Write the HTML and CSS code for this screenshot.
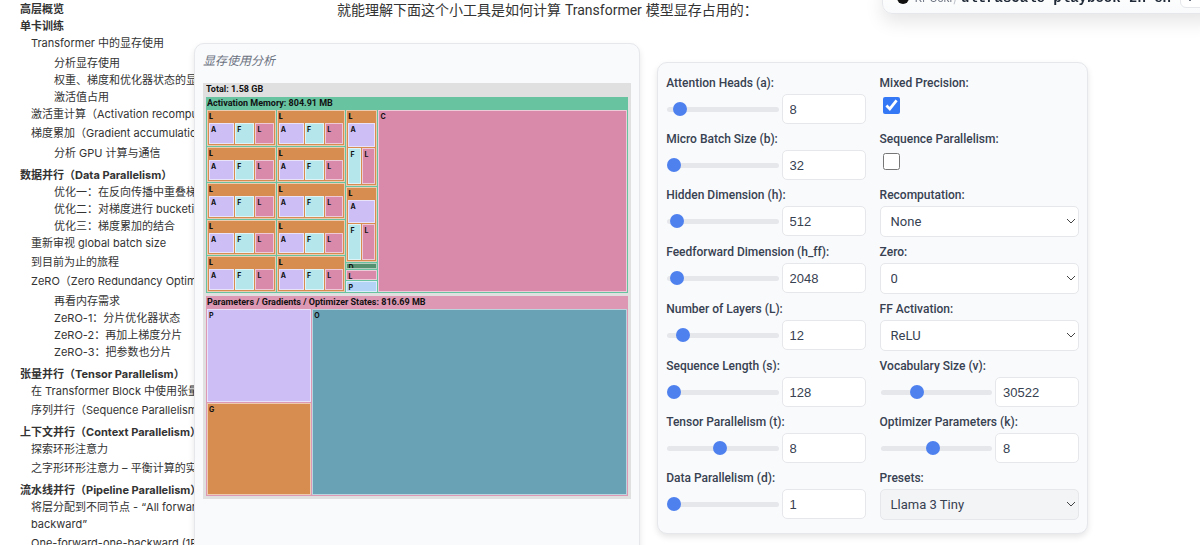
FILE: index.html
```html
<!DOCTYPE html>
<html lang="zh">
<head>
<meta charset="utf-8">
<title>Ultrascale Playbook</title>
<link rel="stylesheet" href="styles.css">
</head>
<body>
<div class="page">
  <nav class="toc">
    <a class="l1" href="#a">高层概览</a>
    <a class="l1" href="#a">单卡训练</a>
    <a class="l2" href="#a">Transformer 中的显存使用</a>
    <a class="l3 g3" href="#a">分析显存使用</a>
    <a class="l3" href="#a">权重、梯度和优化器状态的显存</a>
    <a class="l3" href="#a">激活值占用</a>
    <a class="l2" href="#a">激活重计算（Activation recomputation）</a>
    <a class="l2 g2" href="#a">梯度累加（Gradient accumulation）</a>
    <a class="l3 g3" href="#a">分析 GPU 计算与通信</a>
    <a class="l1 g5" href="#a">数据并行（Data Parallelism）</a>
    <a class="l3" href="#a">优化一：在反向传播中重叠梯度同步</a>
    <a class="l3" href="#a">优化二：对梯度进行 bucketing</a>
    <a class="l3" href="#a">优化三：梯度累加的结合</a>
    <a class="l2" href="#a">重新审视 global batch size</a>
    <a class="l2 g2" href="#a">到目前为止的旅程</a>
    <a class="l2 g2" href="#a">ZeRO（Zero Redundancy Optimizer）</a>
    <a class="l3 g3" href="#a">再看内存需求</a>
    <a class="l3" href="#a">ZeRO-1：分片优化器状态</a>
    <a class="l3" href="#a">ZeRO-2：再加上梯度分片</a>
    <a class="l3" href="#a">ZeRO-3：把参数也分片</a>
    <a class="l1 g5" href="#a">张量并行（Tensor Parallelism）</a>
    <a class="l2" href="#a">在 Transformer Block 中使用张量并行</a>
    <a class="l2 g2" href="#a">序列并行（Sequence Parallelism）</a>
    <a class="l1 g5" href="#a">上下文并行（Context Parallelism）</a>
    <a class="l2" href="#a">探索环形注意力</a>
    <a class="l2 g2" href="#a">之字形环形注意力 – 平衡计算的实现</a>
    <a class="l1 g5" href="#a">流水线并行（Pipeline Parallelism）</a>
    <a class="l2" href="#a">将层分配到不同节点 - “All forward, all<br>backward”</a>
    <a class="l2 g2" href="#a">One-forward-one-backward (1F1B)</a>
  </nav>

  <main class="main">
    <p class="intro">就能理解下面这个小工具是如何计算 <span class="latin">Transformer</span> 模型显存占用的：</p>
    <div class="cards">
      <section class="card chart-card">
        <h2 class="chart-title">显存使用分析</h2>
        <div class="treemap">
          <div class="head">Total: 1.58 GB</div>
          <div class="group activation">
            <div class="head">Activation Memory: 804.91 MB</div>
            <div class="act-body">
              <div class="layers">
                <div class="tile layer"><b>L</b><div class="parts"><i class="tile pa">A</i><i class="tile pf">F</i><i class="tile pl">L</i></div></div>
                <div class="tile layer"><b>L</b><div class="parts"><i class="tile pa">A</i><i class="tile pf">F</i><i class="tile pl">L</i></div></div>
                <div class="tile layer"><b>L</b><div class="parts"><i class="tile pa">A</i><i class="tile pf">F</i><i class="tile pl">L</i></div></div>
                <div class="tile layer"><b>L</b><div class="parts"><i class="tile pa">A</i><i class="tile pf">F</i><i class="tile pl">L</i></div></div>
                <div class="tile layer"><b>L</b><div class="parts"><i class="tile pa">A</i><i class="tile pf">F</i><i class="tile pl">L</i></div></div>
                <div class="tile layer"><b>L</b><div class="parts"><i class="tile pa">A</i><i class="tile pf">F</i><i class="tile pl">L</i></div></div>
                <div class="tile layer"><b>L</b><div class="parts"><i class="tile pa">A</i><i class="tile pf">F</i><i class="tile pl">L</i></div></div>
                <div class="tile layer"><b>L</b><div class="parts"><i class="tile pa">A</i><i class="tile pf">F</i><i class="tile pl">L</i></div></div>
                <div class="tile layer"><b>L</b><div class="parts"><i class="tile pa">A</i><i class="tile pf">F</i><i class="tile pl">L</i></div></div>
                <div class="tile layer"><b>L</b><div class="parts"><i class="tile pa">A</i><i class="tile pf">F</i><i class="tile pl">L</i></div></div>
              </div>
              <div class="narrow">
                <div class="tile layer"><b>L</b><div class="parts tall"><i class="tile pa">A</i><i class="tile pf">F</i><i class="tile pl">L</i></div></div>
                <div class="tile layer"><b>L</b><div class="parts tall"><i class="tile pa">A</i><i class="tile pf">F</i><i class="tile pl">L</i></div></div>
                <i class="tile drop">D</i>
                <i class="tile pl">L</i>
                <i class="tile pp">P</i>
              </div>
              <i class="tile pl">C</i>
            </div>
          </div>
          <div class="group params">
            <div class="head">Parameters / Gradients / Optimizer States: 816.69 MB</div>
            <div class="par-body">
              <i class="tile pa">P</i>
              <i class="tile optim">O</i>
              <i class="tile grad">G</i>
            </div>
          </div>
        </div>
      </section>

      <form class="card controls">
        <div class="field"><label for="a">Attention Heads (a):</label>
          <div class="pair"><input type="range" aria-label="Attention Heads" min="1" max="128" value="8"><input class="box" id="a" type="text" value="8"></div></div>
        <div class="field"><label for="mp">Mixed Precision:</label><input class="check" id="mp" type="checkbox" checked></div>
        <div class="field"><label for="b">Micro Batch Size (b):</label>
          <div class="pair"><input type="range" aria-label="Micro Batch Size" min="1" max="53248" value="32"><input class="box" id="b" type="text" value="32"></div></div>
        <div class="field"><label for="sp">Sequence Parallelism:</label><input class="check" id="sp" type="checkbox"></div>
        <div class="field"><label for="h">Hidden Dimension (h):</label>
          <div class="pair"><input type="range" aria-label="Hidden Dimension" min="1" max="16384" value="512"><input class="box" id="h" type="text" value="512"></div></div>
        <div class="field"><label for="rc">Recomputation:</label><select class="box" id="rc"><option>None</option></select></div>
        <div class="field"><label for="hff">Feedforward Dimension (h_ff):</label>
          <div class="pair"><input type="range" aria-label="Feedforward Dimension" min="1" max="65536" value="2048"><input class="box" id="hff" type="text" value="2048"></div></div>
        <div class="field"><label for="z">Zero:</label><select class="box" id="z"><option>0</option></select></div>
        <div class="field"><label for="l">Number of Layers (L):</label>
          <div class="pair"><input type="range" aria-label="Number of Layers" min="1" max="126" value="12"><input class="box" id="l" type="text" value="12"></div></div>
        <div class="field"><label for="ff">FF Activation:</label><select class="box" id="ff"><option>ReLU</option></select></div>
        <div class="field"><label for="s">Sequence Length (s):</label>
          <div class="pair"><input type="range" aria-label="Sequence Length" min="1" max="128000" value="128"><input class="box" id="s" type="text" value="128"></div></div>
        <div class="field"><label for="v">Vocabulary Size (v):</label>
          <div class="pair"><input type="range" aria-label="Vocabulary Size" min="100" max="100000" value="30522"><input class="box" id="v" type="text" value="30522"></div></div>
        <div class="field"><label for="t">Tensor Parallelism (t):</label>
          <div class="pair"><input type="range" aria-label="Tensor Parallelism" min="1" max="16" value="8"><input class="box" id="t" type="text" value="8"></div></div>
        <div class="field"><label for="k">Optimizer Parameters (k):</label>
          <div class="pair"><input type="range" aria-label="Optimizer Parameters" min="1" max="16" value="8"><input class="box" id="k" type="text" value="8"></div></div>
        <div class="field"><label for="d">Data Parallelism (d):</label>
          <div class="pair"><input type="range" aria-label="Data Parallelism" min="1" max="256" value="1"><input class="box" id="d" type="text" value="1"></div></div>
        <div class="field"><label for="pr">Presets:</label><select class="box preset" id="pr"><option>Llama 3 Tiny</option></select></div>
      </form>
    </div>
  </main>

  <header class="space-bar">
    <span class="avatar"></span>
    <a class="owner" href="#a">Ki-Seki</a><span class="slash">/</span>
    <a class="repo" href="#a">ultrascale-playbook-zh-en</a>
    <button class="more" type="button" aria-label="More"><svg width="8" height="8" viewBox="0 0 8 8"><path d="M1 3l3 3 3-3" fill="none" stroke="#6b7280"/></svg></button>
  </header>
</div>
</body>
</html>
```
FILE: styles.css
```css
* { box-sizing: border-box; }

body {
  margin: 0;
  background: #fff;
  color: #333;
  font-family: Inter, "Noto Sans CJK SC", sans-serif;
}

a { color: inherit; text-decoration: none; }

.page {
  display: grid;
  grid-template-columns: 194px minmax(0, 1fr);
  height: 100vh;
  overflow: hidden;
}

/* table of contents */
.toc {
  display: flex;
  flex-direction: column;
  padding: 1px 0 0 20px;
  overflow: hidden;
  font-size: 11px;
  line-height: 17px;
  white-space: nowrap;
}
.l1 { font-weight: 700; }
.l2 { padding-left: 11px; }
.l3 { padding-left: 34px; }
.g2 { margin-top: 2px; }
.g3 { margin-top: 3px; }
.g5 { margin-top: 5px; }

/* main column */
.main { padding-right: 112px; }
.intro {
  margin: 0 0 23px 143px;
  font-size: 14px;
  line-height: 19px;
  white-space: nowrap;
}
.latin { font-family: Roboto, sans-serif; }

.cards {
  display: flex;
  align-items: flex-start;
  gap: 17px;
}
.card {
  min-width: 0;
  border: 1px solid #e5e7eb;
  border-radius: 10px;
  background: #f9fafc;
  box-shadow: 0 3px 6px rgba(0, 0, 0, .1);
}
.chart-card {
  flex: 446;
  padding: 7px 8px 60px;
}
.chart-title {
  margin: 0 0 13px;
  color: #6b7280;
  font-size: 12px;
  font-style: italic;
  font-weight: 400;
  line-height: 19px;
}

/* treemap */
.treemap {
  display: grid;
  grid-template-rows: 11px 196fr 200fr;
  gap: 3px;
  width: 100%;
  aspect-ratio: 428 / 416;
  padding: 0 3px 3px;
  background: #e0e0e0;
  color: #111;
}
.head {
  overflow: hidden;
  font-family: Roboto, sans-serif;
  font-size: 9px;
  font-weight: 700;
  line-height: 12px;
  white-space: nowrap;
}
.group {
  display: grid;
  grid-template-rows: 12px minmax(0, 1fr);
  gap: 1px;
  min-height: 0;
  padding: 0 1px 1px;
}
.activation { background: #68c3a1; }
.params { background: #dd98b3; }

.act-body {
  display: grid;
  grid-template-columns: 138fr 31fr 248fr;
  gap: 1px;
  min-height: 0;
}
.layers {
  display: grid;
  grid-template-columns: 1fr 1fr;
  grid-template-rows: repeat(5, minmax(0, 1fr));
  gap: 1px;
}
.narrow {
  display: grid;
  grid-template-rows: 76fr 76fr 6fr 10fr 11fr;
  gap: 1px;
  min-height: 0;
}
.tile {
  min-width: 0;
  min-height: 0;
  overflow: hidden;
  border: 1px solid rgba(255, 255, 255, .55);
  font-size: 7px;
  font-style: normal;
  font-weight: 700;
  line-height: 12px;
  padding-left: 1px;
}
.layer {
  display: grid;
  grid-template-rows: 12px minmax(0, 1fr);
  padding: 0 1px 1px 1px;
  background-color: #d78d50;
}
.parts {
  display: grid;
  grid-template-columns: 25fr 19fr 18fr;
  gap: 1px;
  min-height: 0;
}
.tall {
  grid-template-columns: 1fr 1fr;
  grid-template-rows: 24fr 36fr;
}
.tall .pa { grid-column: span 2; }
.pa { background-color: #cdbff6; }
.pf { background-color: #b5e6ec; }
.pl { background-color: #d98aaa; }
.pp { background-color: #b3d4f6; }
.drop { background-color: #55906f; line-height: 8px; }
.optim { background-color: #69a2b5; }
.grad { background-color: #d78d50; }

.par-body {
  display: grid;
  grid-template-columns: 104fr 314fr;
  grid-template-rows: 94fr 93fr;
  gap: 1px;
  min-height: 0;
}
.optim { grid-row: span 2; }

/* control panel */
.controls {
  flex: 430;
  display: grid;
  grid-template-columns: 1fr 1fr;
  gap: 7px 14px;
  margin-top: 19px;
  padding: 12px 8px 13px;
  color: #374151;
}
.field {
  display: flex;
  flex-direction: column;
  align-items: stretch;
  gap: 3px;
  min-width: 0;
}
.field label {
  font-family: Roboto, sans-serif;
  font-size: 12px;
  font-weight: 500;
  line-height: 16px;
  white-space: nowrap;
}
.pair {
  display: grid;
  grid-template-columns: minmax(0, 1fr) 84px;
  align-items: center;
  gap: 2px;
}
.box {
  width: 100%;
  height: 30px;
  border: 1px solid #e5e7eb;
  border-radius: 5px;
  background: #fff;
  color: #374151;
  font: 13px "Liberation Sans", sans-serif;
  padding: 0 7px;
}
select.box {
  height: 31px;
  appearance: none;
  padding: 0 10px;
  font-family: Roboto, sans-serif;
  background: #fff url("data:image/svg+xml,%3Csvg xmlns='http://www.w3.org/2000/svg' width='10' height='7'%3E%3Cpath d='M1 1l4 4 4-4' fill='none' stroke='%23444'/%3E%3C/svg%3E") no-repeat right 2px center;
}
select.preset { background-color: #f3f4f6; }

input[type="range"] {
  appearance: none;
  width: calc(100% - 2px);
  height: 14px;
  margin: 0 0 0 1px;
  background: transparent;
}
input[type="range"]::-webkit-slider-runnable-track {
  height: 5px;
  border-radius: 3px;
  background: #e5e7eb;
}
input[type="range"]::-webkit-slider-thumb {
  appearance: none;
  width: 14px;
  height: 14px;
  margin-top: -5px;
  border-radius: 50%;
  background: #4f81ee;
}
.check {
  width: 17px;
  height: 17px;
  margin: 3px;
  accent-color: #3478f6;
}

/* floating bar at the window's top edge */
.space-bar {
  position: fixed;
  top: -18px;
  right: -21px;
  display: flex;
  align-items: center;
  height: 32px;
  padding: 0 8px 0 14px;
  border: 1px solid #e5e7eb;
  border-radius: 10px;
  background: linear-gradient(#fff, #f9fafb);
  box-shadow: 0 8px 18px rgba(0, 0, 0, .1);
  white-space: nowrap;
}
.avatar {
  width: 12px;
  height: 12px;
  margin-right: 6px;
  border-radius: 50%;
  background: #111;
}
.owner { color: #6b7280; font-size: 11px; }
.slash { margin: 0 3px 0 1px; color: #c4c8cf; font-size: 13px; }
.repo {
  color: #1f2937;
  font: 700 14px "Liberation Mono", monospace;
}
.more {
  width: 32px;
  height: 20px;
  margin-left: 9px;
  padding: 0 0 0 5px;
  border: 1px solid #e5e7eb;
  border-radius: 6px;
  background: #fff;
  text-align: left;
}
```
